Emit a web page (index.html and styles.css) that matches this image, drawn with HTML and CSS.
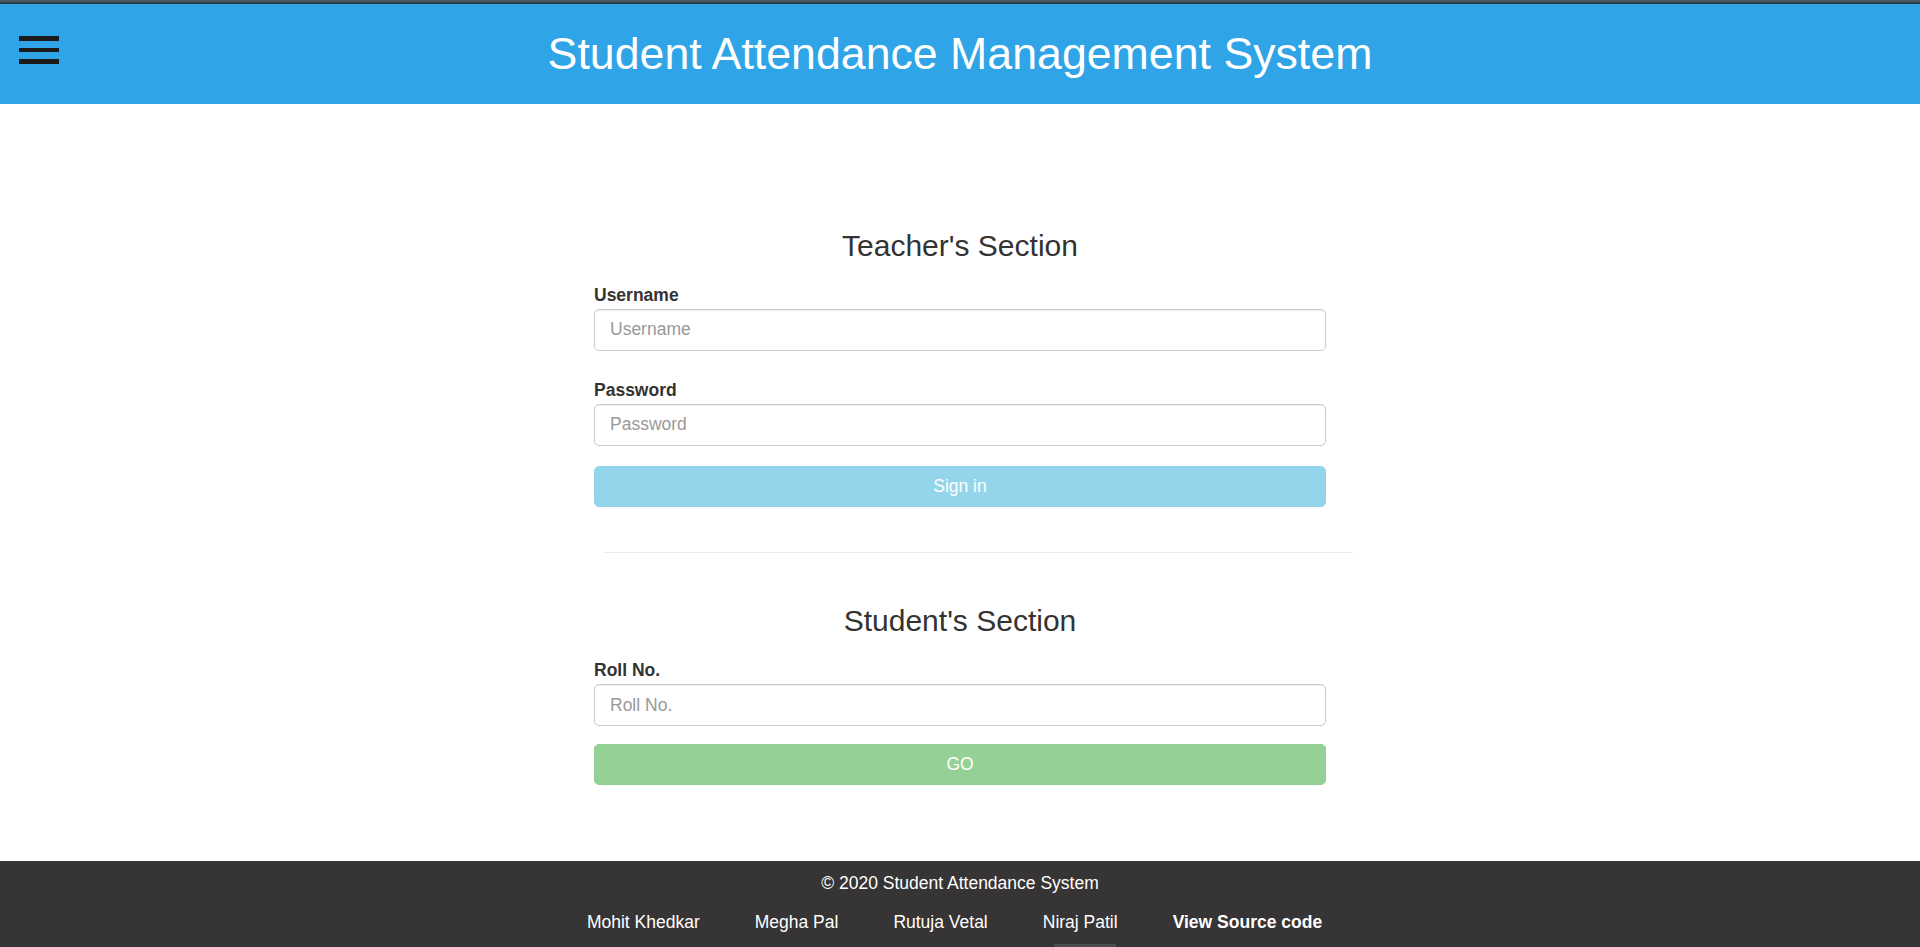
FILE: index.html
```html
<!DOCTYPE html>
<html lang="en">
<head>
<meta charset="utf-8">
<title>Student Attendance Management System</title>
<link rel="stylesheet" href="styles.css">
</head>
<body>
<div class="topline"></div>
<header class="header">
  <div class="menu-cell">
    <button class="hamburger" aria-label="Menu">
      <span class="bar"></span><span class="bar"></span><span class="bar"></span>
    </button>
  </div>
  <h1 class="site-title">Student Attendance Management System</h1>
  <div class="spacer"></div>
</header>

<main class="main">
  <section class="panel">
    <h3 class="section-title">Teacher's Section</h3>
    <form class="form">
      <div class="form-group">
        <label class="field-label" for="username">Username</label>
        <input class="field" id="username" type="text" placeholder="Username">
      </div>
      <div class="form-group">
        <label class="field-label" for="password">Password</label>
        <input class="field" id="password" type="password" placeholder="Password">
      </div>
      <button type="button" class="btn btn-info">Sign in</button>
    </form>
  </section>

  <hr class="divider">

  <section class="panel student">
    <h3 class="section-title">Student's Section</h3>
    <form class="form">
      <div class="form-group">
        <label class="field-label" for="roll">Roll No.</label>
        <input class="field" id="roll" type="text" placeholder="Roll No.">
      </div>
      <button type="button" class="btn btn-success">GO</button>
    </form>
  </section>
</main>

<footer class="footer">
  <p class="copyright">© 2020 Student Attendance System</p>
  <nav class="footer-links">
    <a class="flink">Mohit Khedkar</a>
    <a class="flink">Megha Pal</a>
    <a class="flink">Rutuja Vetal</a>
    <a class="flink active">Niraj Patil</a>
    <a class="flink strong">View Source code</a>
  </nav>
</footer>
</body>
</html>
```

FILE: styles.css
```css
* { box-sizing: border-box; }

html, body {
  margin: 0;
  padding: 0;
}

body {
  font-family: "Liberation Sans", Arial, Helvetica, sans-serif;
  font-size: 17.5px;
  line-height: 25px;
  color: #333;
  background: #fff;
  min-height: 947px;
  display: flex;
  flex-direction: column;
  overflow: hidden;
}

.topline {
  height: 4px;
  background: linear-gradient(#4c5965 0, #4c5965 2px, #2b3a47 2px, #2b3a47 4px);
}

.header {
  height: 100px;
  background: #2fa4e7;
  display: grid;
  grid-template-columns: 1fr auto 1fr;
  align-items: center;
}

.menu-cell {
  padding-left: 19px;
  padding-bottom: 8px;
  display: flex;
  align-items: center;
}

.hamburger {
  border: 0;
  background: transparent;
  padding: 0;
  margin: 0;
  width: 40px;
  display: flex;
  flex-direction: column;
  gap: 7px;
  cursor: pointer;
}

.bar {
  display: block;
  width: 40px;
  height: 4.7px;
  background: #1b1b1b;
}

.site-title {
  margin: 0;
  font-size: 44.7px;
  font-weight: 400;
  line-height: 50px;
  color: #fff;
  text-align: center;
  white-space: nowrap;
}

.main {
  flex: 1;
  width: 732px;
  margin: 0 auto;
  padding-top: 124.5px;
}

.section-title {
  margin: 0 0 21px;
  font-size: 30px;
  line-height: 33px;
  font-weight: 400;
  text-align: center;
  color: #333;
}

.form {
  margin: 0;
}

.form-group {
  margin-bottom: 27px;
}

.form-group:last-of-type {
  margin-bottom: 0;
}

.field-label {
  display: block;
  font-weight: 700;
  font-size: 17.5px;
  line-height: 25px;
  margin-bottom: 1px;
  color: #333;
}

.field {
  display: block;
  width: 100%;
  height: 42px;
  padding: 7.5px 15px;
  font-family: "Liberation Sans", Arial, Helvetica, sans-serif;
  font-size: 17.5px;
  color: #555;
  background: #fff;
  border: 1px solid #cccccc;
  border-radius: 5px;
  box-shadow: inset 0 1px 1px rgba(0,0,0,0.075);
  outline: none;
}

.field::placeholder {
  color: #999;
}

.btn {
  display: block;
  width: 100%;
  height: 41px;
  margin-top: 20px;
  border-radius: 5px;
  font-family: "Liberation Sans", Arial, Helvetica, sans-serif;
  font-size: 17.5px;
  color: #fff;
  cursor: pointer;
}

.btn-info {
  background: #95d5eb;
  border: 1px solid #90d2e9;
}

.btn-success {
  background: #95d095;
  border: 1px solid #90cd90;
  margin-top: 18px;
}

.divider {
  margin: 45px -27px 0 9px;
  border: 0;
  border-top: 1px solid #ececec;
  height: 0;
}

.student {
  margin-top: 51.5px;
}

.footer {
  height: 86px;
  background: #363434;
  color: #fff;
  padding-top: 9.5px;
  text-align: center;
}

.copyright {
  margin: 0;
  line-height: 25px;
  font-size: 17.5px;
}

.footer-links {
  margin-top: 14px;
  display: flex;
  justify-content: center;
  gap: 55px;
  padding-right: 11px;
}

.flink {
  position: relative;
  color: #fff;
  font-size: 17.5px;
  line-height: 25px;
  text-decoration: none;
}

.flink.strong {
  font-weight: 700;
}

.flink.active::after {
  content: "";
  position: absolute;
  left: 11px;
  width: 62px;
  top: 34.5px;
  height: 4px;
  background: #4e4c4c;
}
```
